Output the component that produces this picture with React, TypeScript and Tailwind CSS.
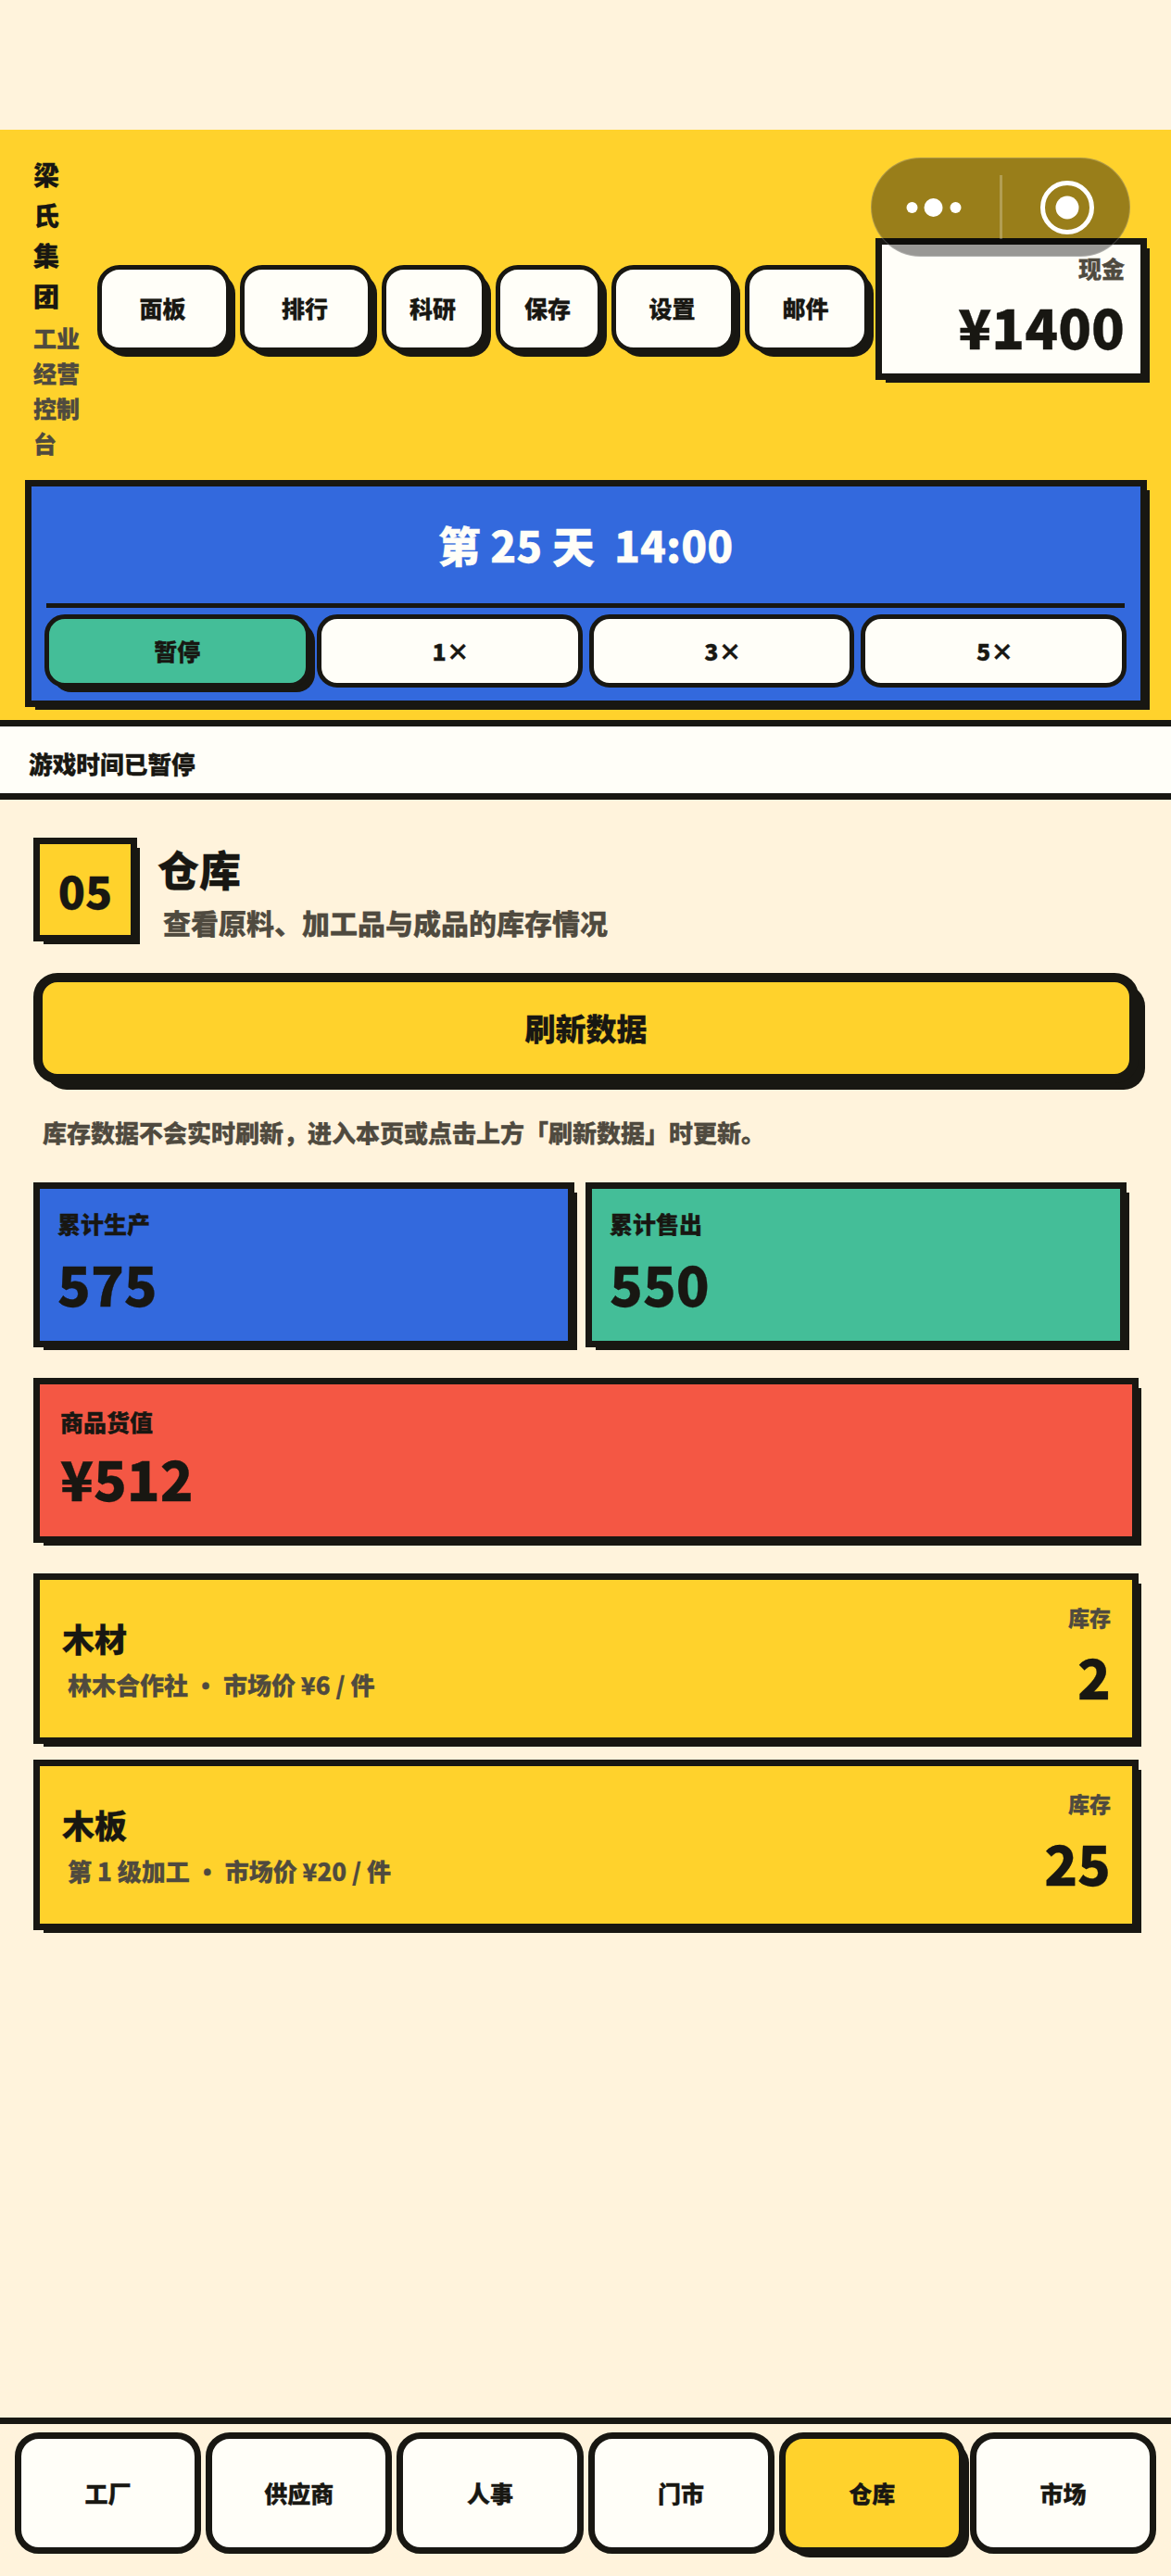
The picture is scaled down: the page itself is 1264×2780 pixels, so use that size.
import React from "react";

const navItems = [
  { label: "面板", w: "w-[144px]" },
  { label: "排行", w: "w-[143px]" },
  { label: "科研", w: "w-[113px]" },
  { label: "保存", w: "w-[115px]" },
  { label: "设置", w: "w-[134px]" },
  { label: "邮件", w: "w-[134px]" },
];

const speeds = [
  { label: "暂停", active: true },
  { label: "1×", active: false },
  { label: "3×", active: false },
  { label: "5×", active: false },
];

const tabs = ["工厂", "供应商", "人事", "门市", "仓库", "市场"];

const items = [
  { name: "木材", sub: "林木合作社 · 市场价 ¥6 / 件", qty: "2" },
  { name: "木板", sub: "第 1 级加工 · 市场价 ¥20 / 件", qty: "25" },
];

function Capsule() {
  return (
    <div className="absolute left-[940px] top-[170px] h-[107px] w-[280px] rounded-full border border-white/20 bg-black/40">
      <svg width="280" height="107" viewBox="0 0 280 107" className="absolute -left-px -top-px">
        <circle cx="44.5" cy="54" r="6" fill="#fff" />
        <circle cx="67.5" cy="54" r="10" fill="#fff" />
        <circle cx="91.5" cy="54" r="6" fill="#fff" />
        <rect x="139" y="19" width="3" height="69" fill="#fff" fillOpacity="0.25" />
        <circle cx="212" cy="54" r="26.5" fill="none" stroke="#fff" strokeWidth="5" />
        <circle cx="212" cy="54" r="12.5" fill="#fff" />
      </svg>
    </div>
  );
}

function StatCard({ label, value, bg }: { label: string; value: string; bg: string }) {
  return (
    <div className={`flex h-[178px] flex-col border-[7px] border-[#181712] pl-[19px] pt-[19px] shadow-[7px_7px_0_-4px_#181712] ${bg}`}>
      <div className="text-[25px] leading-[36px] font-black">{label}</div>
      <div className="mt-[12px] text-[59px] leading-[70px] font-black">{value}</div>
    </div>
  );
}

export default function App() {
  return (
    <div className="relative flex min-h-[2780px] w-full flex-col bg-[#FFF3DC] font-['Noto_Sans_CJK_SC','Noto_Sans',sans-serif] text-[#181712] [-webkit-text-stroke:0.3px_currentColor]">
      <div className="h-[140px]" />

      <header className="h-[644px] border-b-[7px] border-[#181712] bg-[#FFD22C] pl-[27px] pr-[26px] pt-[27px]">
        <div className="flex h-[332px] items-center">
          <div className="ml-[9px] mr-[1px] w-[54px] -translate-y-[1px]">
            <div className="text-[28px] leading-[43.5px] font-black">梁氏集团</div>
            <div className="mt-[4px] text-[25px] leading-[38px] font-black text-[#4F4A3F]">工业经营控制台</div>
          </div>
          <div className="ml-[14px] flex gap-[10px]">
            {navItems.map((n) => (
              <button
                key={n.label}
                className={`flex h-[94px] items-center justify-center rounded-[24px] border-[5px] border-[#181712] bg-[#FFFEF8] pr-[3px] text-[25px] font-black shadow-[7px_7px_0_-2px_#181712] ${n.w}`}
              >
                {n.label}
              </button>
            ))}
          </div>
          <div className="ml-[7px] flex h-[153px] w-[293px] flex-col items-end border-[7px] border-[#181712] bg-[#FFFEF8] pr-[17px] pt-[7px] shadow-[7px_7px_0_-4px_#181712]">
            <div className="text-[25px] leading-[36px] font-black text-[#4F4A3F]">现金</div>
            <div className="mt-[5px] text-[59px] leading-[80px] font-black">¥1400</div>
          </div>
        </div>

        <div className="mt-[19px] h-[245px] border-[7px] border-[#181712] bg-[#3369DD] pl-[14px] pr-[15px] shadow-[7px_7px_0_-4px_#181712]">
          <div className="flex h-[126px] items-center justify-center pb-[2px] text-[46px] font-black text-[#FFFEF8]">
            第 25 天&nbsp; 14:00
          </div>
          <div className="mx-[2px] h-[5px] bg-[#181712]" />
          <div className="mt-[7px] grid grid-cols-4 gap-[7px]">
            {speeds.map((s) => (
              <button
                key={s.label}
                className={
                  s.active
                    ? "flex h-[79px] items-center justify-center rounded-[22px] border-[5px] border-[#181712] bg-[#44BE98] text-[25px] font-black shadow-[7px_7px_0_-2px_#181712]"
                    : "flex h-[79px] items-center justify-center rounded-[22px] border-[5px] border-[#181712] bg-[#FFFEF8] pl-[3px] text-[25px] font-black"
                }
              >
                {s.label}
              </button>
            ))}
          </div>
        </div>
      </header>

      <div className="flex h-[79px] items-center border-b-[7px] border-[#181712] bg-[#FFFEF8] pl-[31px] pt-[8px] text-[25.7px] font-black">
        游戏时间已暂停
      </div>

      <main className="pl-[36px] pr-[35px] pt-[41px]">
        <div className="flex">
          <div className="flex h-[112px] w-[112px] items-center justify-center border-[7px] border-[#181712] bg-[#FFD22C] text-[48px] font-black shadow-[7px_7px_0_-4px_#181712]">
            05
          </div>
          <div className="ml-[22px] mt-[4px]">
            <div className="text-[45px] leading-[60px] font-black">仓库</div>
            <div className="mt-[7px] pl-[6px] text-[30px] leading-[40px] font-black text-[#4F4A3F]">
              查看原料、加工品与成品的库存情况
            </div>
          </div>
        </div>

        <button className="mt-[34px] flex h-[119px] w-full items-center justify-center rounded-[26px] border-[10px] border-[#181712] bg-[#FFD22C] text-[33px] font-black shadow-[10px_10px_0_-3px_#181712]">
          刷新数据
        </button>

        <div className="mt-[33px] mb-[34px] pl-[10px] text-[26px] leading-[40px] font-black text-[#4F4A3F]">
          库存数据不会实时刷新，进入本页或点击上方「刷新数据」时更新。
        </div>

        <div className="grid w-[1180px] grid-cols-2 gap-[12px]">
          <StatCard label="累计生产" value="575" bg="bg-[#3369DD]" />
          <StatCard label="累计售出" value="550" bg="bg-[#44BE98]" />
        </div>

        <div className="mt-[33px] flex h-[178px] flex-col border-[7px] border-[#181712] bg-[#F45744] pl-[22px] pt-[22px] shadow-[7px_7px_0_-4px_#181712]">
          <div className="text-[25px] leading-[36px] font-black">商品货值</div>
          <div className="mt-[8px] text-[59px] leading-[70px] font-black">¥512</div>
        </div>

        <div className="mt-[33px] flex flex-col gap-[17px]">
          {items.map((it) => (
            <div
              key={it.name}
              className="flex h-[184px] items-start justify-between border-[7px] border-[#181712] bg-[#FFD22C] pl-[24px] pr-[23px] shadow-[7px_7px_0_-4px_#181712]"
            >
              <div className="pt-[38px]">
                <div className="text-[35px] leading-[50px] font-black">{it.name}</div>
                <div className="mt-[6px] pl-[6px] text-[26px] leading-[38px] font-black whitespace-pre text-[#4F4A3F]">
                  {it.sub}
                </div>
              </div>
              <div className="flex flex-col items-end pt-[22px]">
                <div className="text-[23px] leading-[36px] font-black text-[#4F4A3F]">库存</div>
                <div className="mt-[11px] text-[59px] leading-[70px] font-black">{it.qty}</div>
              </div>
            </div>
          ))}
        </div>
      </main>

      <footer className="mt-auto grid h-[171px] grid-cols-6 gap-[5px] border-t-[7px] border-[#181712] pl-[16px] pr-[16px] pt-[9px]">
        {tabs.map((t) => (
          <button
            key={t}
            className={
              t === "仓库"
                ? "flex h-[131px] items-center justify-center rounded-[26px] border-[7px] border-[#181712] bg-[#FFD22C] text-[25px] font-black shadow-[7px_7px_0_-3px_#181712]"
                : "flex h-[131px] items-center justify-center rounded-[26px] border-[7px] border-[#181712] bg-[#FFFEF8] text-[25px] font-black"
            }
          >
            {t}
          </button>
        ))}
      </footer>

      <Capsule />
    </div>
  );
}
